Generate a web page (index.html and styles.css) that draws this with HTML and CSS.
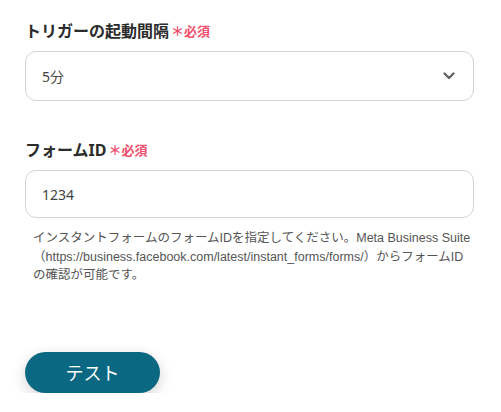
FILE: index.html
```html
<!DOCTYPE html>
<html lang="ja">
<head>
<meta charset="utf-8">
<link rel="stylesheet" href="styles.css">
</head>
<body>
<div class="form">
  <div class="field">
    <div class="label">トリガーの起動間隔<span class="req">＊必須</span></div>
    <div class="select">
      <span>5分</span>
      <svg class="chev" width="12" height="8" viewBox="0 0 12 8"><path d="M1.5 1.5 L6 6 L10.5 1.5" fill="none" stroke="#5f5f5f" stroke-width="2.2" stroke-linecap="round" stroke-linejoin="round"/></svg>
    </div>
  </div>
  <div class="field second">
    <div class="label">フォームID<span class="req">＊必須</span></div>
    <div class="input">1234</div>
    <p class="help">インスタントフォームのフォームIDを指定してください。Meta Business Suite<br>（https://business.facebook.com/latest/instant_forms/forms/）からフォームID<br>の確認が可能です。</p>
  </div>
  <div class="actions">
    <button class="btn">テスト</button>
  </div>
</div>
</body>
</html>
```

FILE: styles.css
```css
html, body {
  margin: 0;
  padding: 0;
  background: #fff;
}
body {
  font-family: "Noto Sans", "Noto Sans CJK JP", sans-serif;
  color: #333;
}
.form {
  padding: 20px 27px 0 25px;
  display: flex;
  flex-direction: column;
}
.label {
  font-size: 16px;
  font-weight: 700;
  color: #2b2b2b;
  line-height: 22px;
  display: flex;
  align-items: center;
}
.req {
  color: #f0506e;
  font-size: 13px;
  font-weight: 700;
  margin-left: 2px;
}
.select, .input {
  box-sizing: border-box;
  margin-top: 9px;
  border: 1px solid #cfd4dc;
  border-radius: 11px;
  height: 50px;
  padding: 0 16px;
  display: flex;
  align-items: center;
  justify-content: space-between;
  font-size: 14px;
  color: #444;
}
.input {
  height: 48px;
}
.chev {
  margin-right: 2px;
}
.second {
  margin-top: 38px;
}
.help {
  margin: 11px -6px 0 0;
  padding-left: 8px;
  font-family: "Liberation Sans", "Noto Sans CJK JP", sans-serif;
  font-size: 12.5px;
  line-height: 18.5px;
  color: #555;
  white-space: nowrap;
}
.actions {
  margin-top: 67px;
}
.btn {
  width: 135px;
  height: 41px;
  border: 0;
  border-radius: 21px;
  background: #0b6882;
  color: #fff;
  font-family: "Noto Sans", "Noto Sans CJK JP", sans-serif;
  font-size: 18px;
  box-shadow: 0 4px 14px rgba(0, 0, 0, 0.18);
}
```
